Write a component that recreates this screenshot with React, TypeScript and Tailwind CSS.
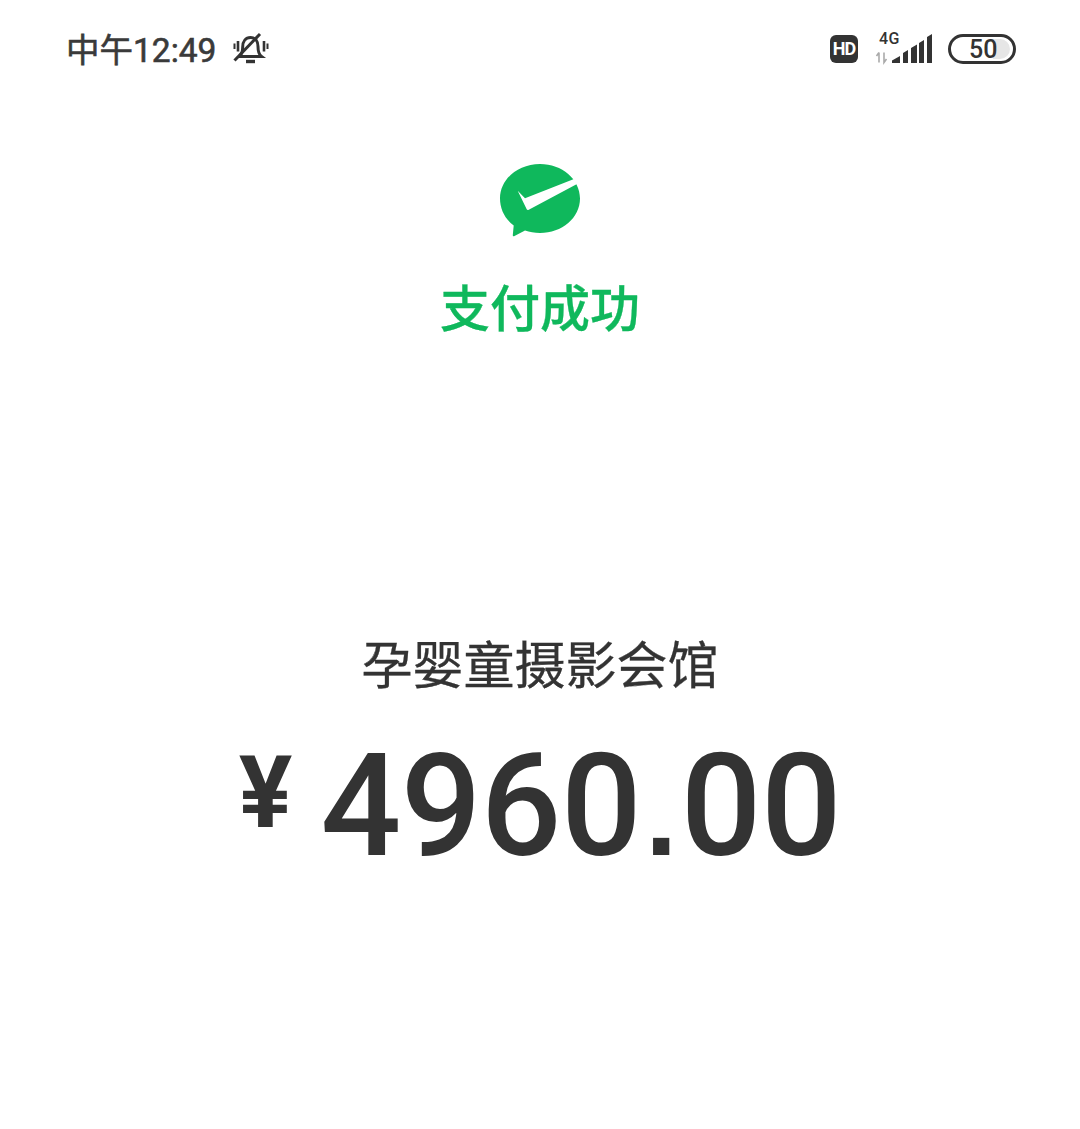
export default function App() {
  const cjk = { fontFamily: '"Roboto","Noto Sans CJK SC",sans-serif' };
  return (
    <div className="w-[1080px] h-[1129px] bg-white flex flex-col items-center text-[#333333] overflow-hidden" style={cjk}>
      <div className="w-full h-[100px] flex items-start justify-between pl-[66px] pr-[64px] pt-[30px]">
        <div className="flex items-center h-[38px]">
          <span className="mt-[3px] text-[33.500px] leading-[38px] text-[#3a3a3a]" style={{ WebkitTextStroke: '0.6px #3a3a3a' }}>中午12:49</span>
          <svg className="ml-[17px]" width="36" height="36" viewBox="0 0 36 36" fill="none" stroke="#333" strokeWidth="3">
            <path d="M6.500 25.500c2.500-2.500 3.200-5 3.200-9.500 0-5.500 3-9.500 7.800-9.500 4.700 0 7.500 3.500 7.500 9 0 5 .8 8 3.500 10z" />
            <path d="M13 30.500h9" strokeWidth="3.400" />
            <path d="M1.500 29.500 27 3" />
            <path d="M5 10v10.500M31 10v10.500" strokeWidth="2.600" />
            <path d="M1.500 12.500v5.500M34.500 12.500v5.500" strokeWidth="2" />
          </svg>
        </div>
        <div className="flex items-center h-[38px]">
          <div className="w-[28px] h-[28px] rounded-[6px] bg-[#333333] text-white text-[18px] leading-[28px] font-bold text-center tracking-[-1px]">HD</div>
          <div className="ml-[17px] w-[58px] h-[38px] relative">
            <span className="absolute left-[4px] top-[1px] text-[16px] leading-[16px] font-medium tracking-[0.5px]">4G</span>
            <svg width="58" height="38" viewBox="0 0 58 38" fill="none">
              <path d="M4 22.500v10M1.500 26l2.500-3.500M9 22.500v10l2.500-3.500" stroke="#aaa" strokeWidth="1.600" />
              <path d="M17 33v-2.500l8-4.500v7z" fill="#333" />
              <path d="M28 33V23l5-3v13zM36 33V18l6-3.500V33zM44 33V13l5-3v23zM52 33V7l5-3v29z" fill="#333" />
            </svg>
          </div>
          <div className="w-[68px] h-[30px] ml-[15px] rounded-full border-[3px] border-[#333333] relative flex items-center overflow-hidden">
            <div className="absolute left-[42px] right-[3px] top-[2px] bottom-[2px] rounded-r-full bg-[#e6e6e6]" />
            <span className="relative ml-[18px] mt-[2px] text-[25px] leading-[24px] font-medium">50</span>
          </div>
        </div>
      </div>
      <svg className="mt-[64px]" width="80" height="74" viewBox="500 164 80 74">
        <path d="M540 164c22 0 40 15.200 40 34.500s-18 34.500-40 34.500c-5.500 0-10.500-.9-15-2.500l-10.500 5.500c-1 .6-1.800 0-1.700-1l.9-9.500C504.900 219 500 209 500 198.500c0-19.300 18-34.500 40-34.500z" fill="#0fb85c" />
        <path d="M517.700 190.700 525 198.300 574 179l3 5-48.700 26c-.7.300-1.300 0-1.600-.7z" fill="#fff" />
      </svg>
      <div className="mt-[36px] text-[50px] leading-[72px] font-medium text-[#0fb85c]" style={{ WebkitTextStroke: '0.3px #0fb85c' }}>支付成功</div>
      <div className="mt-[285px] text-[51px] leading-[72px] text-[#333333]" style={{ WebkitTextStroke: '0.3px #333333' }}>孕婴童摄影会馆</div>
      <div className="mt-[24px] flex items-start font-medium">
        <span className="mt-[6px] text-[100px] leading-[120px] font-bold">¥</span>
        <span className="ml-[28px] text-[142px] leading-[160px] tracking-[-0.5px]">4960<span className="mx-[4px] text-[115px] font-bold" style={{ fontFamily: '"Liberation Sans",sans-serif' }}>.</span>00</span>
      </div>
    </div>
  );
}
